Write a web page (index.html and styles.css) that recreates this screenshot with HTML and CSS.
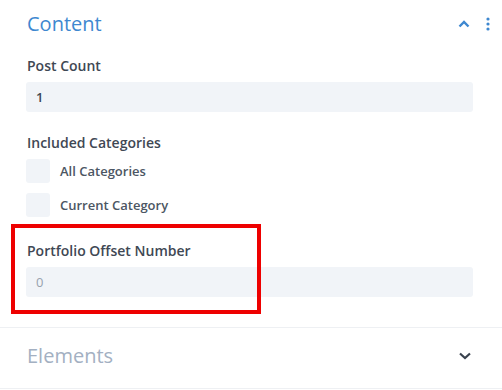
FILE: index.html
```html
<!DOCTYPE html>
<html lang="en">

<head>
    <meta charset="UTF-8">
    <meta name="viewport" content="width=device-width, initial-scale=1.0">
    <title>Portfolio Settings</title>
    <link rel="stylesheet" href="styles.css">
</head>

<body>
    <div class="panel">

        <div class="toggle open">
            <div class="toggle-head">
                <h3 class="toggle-title">Content</h3>
                <div class="toggle-icons">
                    <svg class="chevron up" width="12" height="8" viewBox="0 0 12 8">
                        <path d="M1.5 6.5 L6 2 L10.5 6.5" fill="none" stroke="#3e88d0" stroke-width="2.4" />
                    </svg>
                    <svg class="dots" width="4" height="14" viewBox="0 0 4 14">
                        <circle cx="2" cy="2" r="1.6" fill="#3e88d0" />
                        <circle cx="2" cy="7" r="1.6" fill="#3e88d0" />
                        <circle cx="2" cy="12" r="1.6" fill="#3e88d0" />
                    </svg>
                </div>
            </div>

            <div class="toggle-body">
                <div class="field">
                    <label class="field-label" for="postCount">Post Count</label>
                    <input class="field-input" type="text" id="postCount" value="1">
                </div>

                <div class="field">
                    <span class="field-label">Included Categories</span>
                    <div class="checks">
                        <label class="check"><span class="check-box"></span>All Categories</label>
                        <label class="check"><span class="check-box"></span>Current Category</label>
                    </div>
                </div>

                <div class="field marked">
                    <span class="mark"></span>
                    <label class="field-label" for="offset">Portfolio Offset Number</label>
                    <input class="field-input placeholder" type="text" id="offset" placeholder="0">
                </div>
            </div>
        </div>

        <div class="toggle closed">
            <div class="toggle-head">
                <h3 class="toggle-title">Elements</h3>
                <div class="toggle-icons">
                    <svg class="chevron" width="14" height="8" viewBox="0 0 14 8">
                        <path d="M2 1.5 L7 6 L12 1.5" fill="none" stroke="#39424e" stroke-width="2.2" />
                    </svg>
                </div>
            </div>
        </div>

    </div>
</body>

</html>
```

FILE: styles.css
```css
body {
    margin: 0;
    background-color: #fff;
    font-family: "Open Sans", "Noto Sans", sans-serif;
}

.panel {
    width: 502px;
}

.toggle {
    border-bottom: 1px solid #eef0f3;
}

.toggle-head {
    display: flex;
    align-items: center;
    justify-content: space-between;
    padding: 12px 12px 0 27px;
    height: 24px;
}

.toggle-title {
    margin: 0;
    font-size: 20px;
    line-height: 24px;
    font-weight: 400;
    color: #3e88d0;
}

.closed .toggle-head {
    padding-top: 16px;
    padding-bottom: 20px;
}

.closed .toggle-title {
    color: #a3b0c2;
}

.toggle-icons {
    display: flex;
    align-items: center;
    gap: 16px;
}

.closed .toggle-icons {
    padding-right: 18px;
}

.toggle-body {
    padding: 20px 29px 30px 26px;
}

.field {
    margin-bottom: 21px;
}

.field:last-child {
    margin-bottom: 0;
}

.field-label {
    display: block;
    margin: 0 0 6px 1px;
    font-size: 14px;
    line-height: 20px;
    font-weight: 600;
    color: #3f4854;
}

.field-input {
    display: block;
    width: 100%;
    height: 30px;
    box-sizing: border-box;
    padding: 0 10px;
    border: none;
    border-radius: 3px;
    background-color: #f1f4f8;
    font-family: inherit;
    font-size: 13px;
    font-weight: 600;
    color: #3f4854;
    outline: none;
}

.field-input::placeholder {
    color: #98a2ae;
    font-weight: 400;
}

.checks {
    display: flex;
    flex-direction: column;
    gap: 10px;
    margin-top: 5px;
}

.check {
    display: flex;
    align-items: center;
    gap: 10px;
    font-size: 13px;
    font-weight: 600;
    color: #4c5663;
}

.check-box {
    width: 24px;
    height: 24px;
    border-radius: 3px;
    background-color: #f1f4f8;
}

.marked {
    position: relative;
    margin-top: 24px;
}

.mark {
    position: absolute;
    left: -15px;
    top: -17px;
    width: 250px;
    height: 90px;
    box-sizing: border-box;
    border: 4px solid #ee0000;
}
```
